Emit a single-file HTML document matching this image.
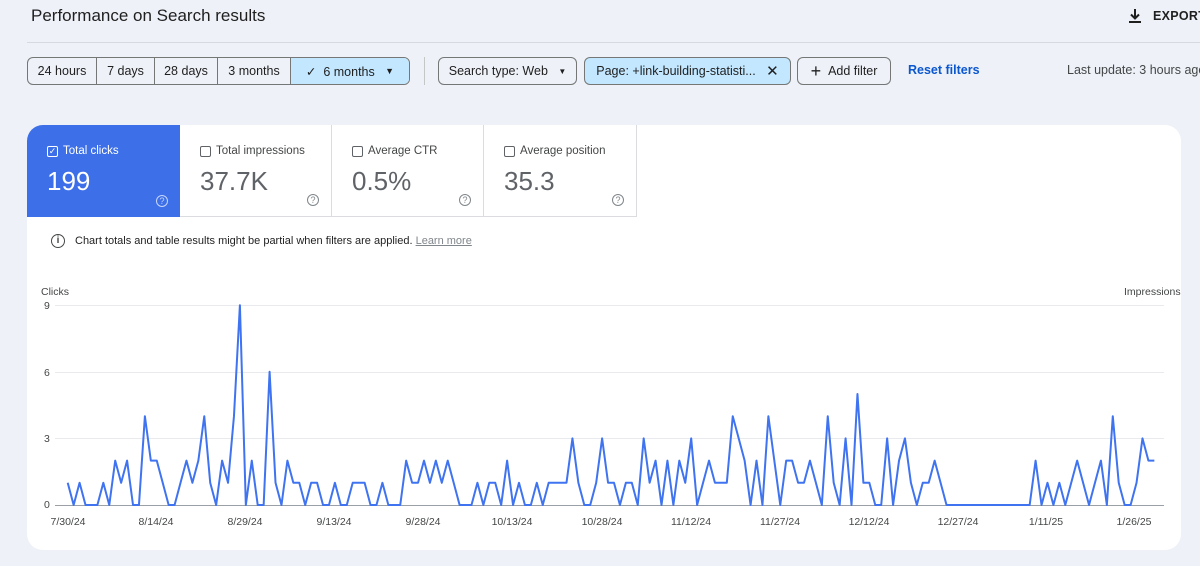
<!DOCTYPE html>
<html><head><meta charset="utf-8"><style>
*{box-sizing:border-box;margin:0;padding:0}
body{width:1200px;height:566px;overflow:hidden;background:#eef1f8;font-family:"Liberation Sans",Arial,sans-serif;color:#1f1f1f;position:relative}
.a{position:absolute}
.title{left:31px;top:6px;font-size:17px;color:#1f1f1f}
.hr{left:27px;top:42px;width:1173px;height:1px;background:#d6d9e0}
.btn{position:absolute;top:57px;height:28px;border:1px solid #747775;border-radius:6px;font-size:12.5px;display:flex;align-items:center;justify-content:center;color:#1f1f1f;background:#eef1f8}
.seg{position:absolute;top:0;bottom:0;display:flex;align-items:center;justify-content:center;border-right:1px solid #747775}
.card{left:27px;top:125px;width:1154px;height:425px;background:#fff;border-radius:16px;overflow:hidden}
.tile{position:absolute;top:0;height:92px;border-right:1px solid #dadce0;border-bottom:1px solid #dadce0}
.lab{position:absolute;left:20px;top:20px;font-size:11.5px;color:#444746;display:flex;align-items:center}
.cb{width:11px;height:11px;border:1.3px solid #5f6368;border-radius:2px;margin-right:5px}
.val{position:absolute;left:20px;top:41px;font-size:26px;color:#5f6368}
.q{position:absolute;right:12px;bottom:10px;width:12px;height:12px;border:1px solid #80868b;border-radius:50%;font-size:9px;color:#80868b;text-align:center;line-height:10px}
.xl{position:absolute;top:516px;font-size:10.5px;color:#444746;transform:translateX(-50%)}
.yl{position:absolute;left:44px;font-size:10.5px;color:#444746}
</style></head><body>
<div class="a title">Performance on Search results</div>
<div class="a" style="left:1128px;top:8px;display:flex;align-items:center;font-size:12.5px;font-weight:bold;color:#1f1f1f">
<svg width="14" height="16" viewBox="0 0 14 16"><path d="M7 1v9M3 6.5l4 4 4-4" stroke="#1f1f1f" stroke-width="2" fill="none"/><rect x="1" y="13" width="12" height="2" fill="#1f1f1f"/></svg><span style="margin-left:11px;letter-spacing:.3px">EXPORT</span></div>
<div class="a hr"></div>

<div class="btn" style="left:27px;width:383px;overflow:hidden">
<div class="seg" style="left:0;width:69px">24 hours</div>
<div class="seg" style="left:69px;width:58px">7 days</div>
<div class="seg" style="left:127px;width:63px">28 days</div>
<div class="seg" style="left:190px;width:73px">3 months</div>
<div class="seg" style="left:263px;right:0;border-right:none;background:#c2e7ff">✓&nbsp;&nbsp;6 months&nbsp;&nbsp;&nbsp;<span style="font-size:9px">▼</span></div>
</div>
<div class="a" style="left:424px;top:57px;width:1px;height:28px;background:#c4c7c5"></div>
<div class="btn" style="left:438px;width:139px">Search type: Web&nbsp;&nbsp;&nbsp;<span style="font-size:8px">▼</span></div>
<div class="btn" style="left:584px;width:207px;background:#c2e7ff">Page: +link-building-statisti...&nbsp;&nbsp;&nbsp;<span style="font-size:15px">✕</span></div>
<div class="btn" style="left:797px;width:94px"><span style="font-size:18px;margin-right:7px;font-weight:300">+</span>Add filter</div>
<div class="a" style="left:908px;top:63px;font-size:12.5px;color:#0b57d0;font-weight:bold">Reset filters</div>
<div class="a" style="left:1067px;top:63px;font-size:12.5px;color:#444746;white-space:nowrap">Last update: 3 hours ago</div>

<div class="a card">
<div class="tile" style="left:0;width:153px;background:#3c6fe8;border:none">
<div class="lab" style="color:#fff"><div class="cb" style="border-color:#fff;font-size:9px;line-height:8px;text-align:center">✓</div>Total clicks</div>
<div class="val" style="color:#fff">199</div><div class="q" style="border-color:#c8d6fa;color:#c8d6fa">?</div></div>
<div class="tile" style="left:153px;width:152px"><div class="lab"><div class="cb"></div>Total impressions</div><div class="val">37.7K</div><div class="q">?</div></div>
<div class="tile" style="left:305px;width:152px"><div class="lab"><div class="cb"></div>Average CTR</div><div class="val">0.5%</div><div class="q">?</div></div>
<div class="tile" style="left:457px;width:153px"><div class="lab"><div class="cb"></div>Average position</div><div class="val">35.3</div><div class="q">?</div></div>
<div class="a" style="left:24px;top:109px;width:14px;height:14px;border:1.4px solid #444746;border-radius:50%;font-size:10px;text-align:center;line-height:12px;font-weight:bold;color:#444746">i</div>
<div class="a" style="left:48px;top:110px;font-size:11px;color:#1f1f1f">Chart totals and table results might be partial when filters are applied. <span style="color:#80868b;text-decoration:underline">Learn more</span></div>
</div>

<div class="a" style="left:41px;top:286px;font-size:10.5px;color:#444746">Clicks</div>
<div class="a" style="left:1124px;top:286px;font-size:10.5px;color:#444746">Impressions</div>
<div class="yl" style="top:300px">9</div><div class="yl" style="top:367px">6</div><div class="yl" style="top:433px">3</div><div class="yl" style="top:499px">0</div>
<svg class="a" style="left:0;top:0" width="1200" height="566">
<g stroke="#e8eaed" stroke-width="1"><line x1="55" x2="1164" y1="305.5" y2="305.5"/><line x1="55" x2="1164" y1="372.5" y2="372.5"/><line x1="55" x2="1164" y1="438.5" y2="438.5"/></g>
<line x1="55" x2="1164" y1="505.5" y2="505.5" stroke="#9aa0a6"/>
<g transform="translate(67.7,505) scale(5.938,-22.2)">
<polyline fill="none" stroke="#3f73f0" stroke-width="2" vector-effect="non-scaling-stroke" stroke-linejoin="round" points="0,1 1,0 2,1 3,0 4,0 5,0 6,1 7,0 8,2 9,1 10,2 11,0 12,0 13,4 14,2 15,2 16,1 17,0 18,0 19,1 20,2 21,1 22,2 23,4 24,1 25,0 26,2 27,1 28,4 29,9 30,0 31,2 32,0 33,0 34,6 35,1 36,0 37,2 38,1 39,1 40,0 41,1 42,1 43,0 44,0 45,1 46,0 47,0 48,1 49,1 50,1 51,0 52,0 53,1 54,0 55,0 56,0 57,2 58,1 59,1 60,2 61,1 62,2 63,1 64,2 65,1 66,0 67,0 68,0 69,1 70,0 71,1 72,1 73,0 74,2 75,0 76,1 77,0 78,0 79,1 80,0 81,1 82,1 83,1 84,1 85,3 86,1 87,0 88,0 89,1 90,3 91,1 92,1 93,0 94,1 95,1 96,0 97,3 98,1 99,2 100,0 101,2 102,0 103,2 104,1 105,3 106,0 107,1 108,2 109,1 110,1 111,1 112,4 113,3 114,2 115,0 116,2 117,0 118,4 119,2 120,0 121,2 122,2 123,1 124,1 125,2 126,1 127,0 128,4 129,1 130,0 131,3 132,0 133,5 134,1 135,1 136,0 137,0 138,3 139,0 140,2 141,3 142,1 143,0 144,1 145,1 146,2 147,1 148,0 162,0 163,2 164,0 165,1 166,0 167,1 168,0 169,1 170,2 171,1 172,0 173,1 174,2 175,0 176,4 177,1 178,0 179,0 180,1 181,3 182,2 183,2"/>
</g></svg>
<div class="xl" style="left:68px">7/30/24</div><div class="xl" style="left:156px">8/14/24</div><div class="xl" style="left:245px">8/29/24</div><div class="xl" style="left:334px">9/13/24</div><div class="xl" style="left:423px">9/28/24</div><div class="xl" style="left:512px">10/13/24</div><div class="xl" style="left:602px">10/28/24</div><div class="xl" style="left:691px">11/12/24</div><div class="xl" style="left:780px">11/27/24</div><div class="xl" style="left:869px">12/12/24</div><div class="xl" style="left:958px">12/27/24</div><div class="xl" style="left:1046px">1/11/25</div><div class="xl" style="left:1134px">1/26/25</div>
</body></html>
